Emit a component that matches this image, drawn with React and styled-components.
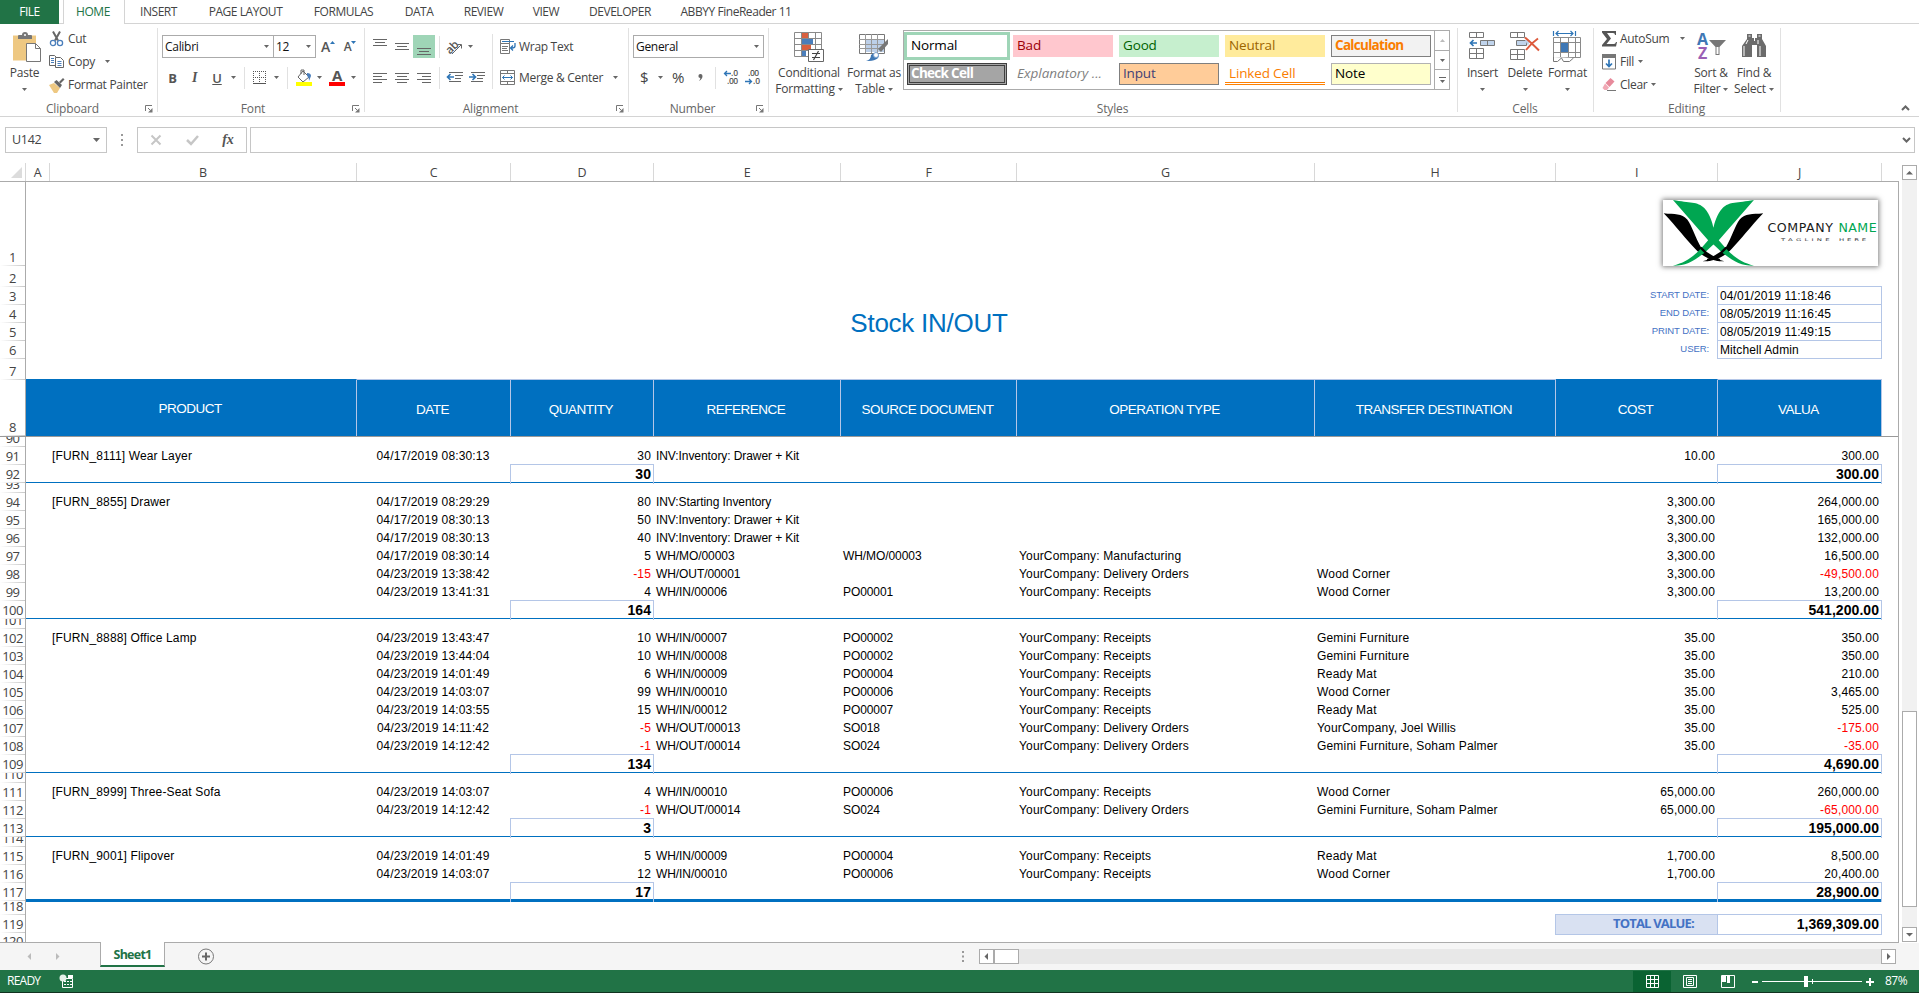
import React from 'react';
import styled, { createGlobalStyle, css } from 'styled-components';

const UI = '"Open Sans", "Noto Sans", sans-serif';
const ARIAL = '"Liberation Sans", Arial, sans-serif';
const BLUE = '#0070c0';
const EDGE = '#b4c6e7';
const FRAME = '#ababab';

const Global = createGlobalStyle`
  *, *::before, *::after { box-sizing: border-box; }
  body { margin: 0; background: #fff; overflow: hidden; }
  svg { display: block; flex: none; overflow: visible; }
`;

const Page = styled.div`
  width: 1919px;
  height: 993px;
  display: flex;
  flex-direction: column;
  background: #fff;
  font: 12px/16px ${UI};
  letter-spacing: -0.3px;
  color: #444;
  white-space: nowrap;
  overflow: hidden;
`;

/* ---------- ribbon tabs ---------- */
const TabStrip = styled.div`
  display: flex;
  height: 24px;
  flex: none;
  border-bottom: 1px solid #d4d4d4;
  letter-spacing: -0.45px;
`;
const FileTab = styled.div`
  width: 59px;
  height: 24px;
  margin-right: 4px;
  background: #217346;
  color: #fff;
  text-align: center;
  line-height: 23px;
`;
const Tab = styled.div`
  width: ${(p) => p.$w}px;
  height: 24px;
  line-height: 23px;
  padding-right: 2px;
  text-align: center;
  ${(p) =>
    p.$active &&
    css`
      color: #217346;
      background: #fff;
      border: 1px solid #d4d4d4;
      border-width: 0 1px;
    `}
`;

/* ---------- ribbon ---------- */
const Ribbon = styled.div`
  display: flex;
  height: 93px;
  flex: none;
  border-bottom: 1px solid #d4d4d4;
`;
const Group = styled.section`
  width: ${(p) => p.$w}px;
  height: 92px;
  display: flex;
  flex-direction: column;
  background: linear-gradient(#e1e1e1, #e1e1e1) right 4px / 1px 84px no-repeat;
`;
const GroupBody = styled.div`
  height: 75px;
  display: flex;
  padding-left: ${(p) => p.$pl || 0}px;
`;
const GroupFoot = styled.div`
  height: 17px;
  display: flex;
  align-items: center;
  justify-content: center;
  color: #666;
  letter-spacing: -0.15px;
  padding: 2px ${(p) => (p.$plain ? 2 : 5)}px 0 0;
`;
const FootLabel = styled.span`
  flex: 1;
  text-align: center;
  padding-right: ${(p) => p.$back || 0}px;
`;
const Stack = styled.div`
  display: flex;
  flex-direction: column;
  width: ${(p) => (p.$w ? p.$w + 'px' : 'auto')};
  padding-top: ${(p) => p.$pt || 0}px;
  padding-left: ${(p) => p.$pl || 0}px;
`;
const Line = styled.div`
  display: flex;
  align-items: center;
  height: ${(p) => p.$h || 23}px;
  margin-top: ${(p) => p.$mt || 0}px;
`;
const Slot = styled.span`
  display: inline-flex;
  align-items: center;
  justify-content: ${(p) => (p.$left ? 'flex-start' : 'center')};
  flex: none;
  width: ${(p) => p.$w}px;
  height: ${(p) => p.$h || 22}px;
  background: ${(p) => p.$bg || 'transparent'};
  letter-spacing: ${(p) => p.$track || '-0.2px'};
`;
const Divider = styled.span`
  width: 1px;
  height: ${(p) => p.$h || 22}px;
  background: #e1e1e1;
  flex: none;
`;
const BigButton = styled.div`
  width: ${(p) => p.$w}px;
  display: flex;
  flex-direction: column;
  align-items: center;
  padding-top: 8px;
`;
const BigArt = styled.div`
  height: 33px;
  padding-left: ${(p) => p.$pl || 0}px;
`;
const BigText = styled.div`
  height: 16px;
  display: flex;
  align-items: center;
  gap: 3px;
  letter-spacing: ${(p) => p.$track || '-0.2px'};
`;
const Combo = styled.div`
  width: ${(p) => p.$w}px;
  height: 23px;
  margin-left: ${(p) => p.$ml || 0}px;
  border: 1px solid #ababab;
  display: flex;
  align-items: center;
  justify-content: space-between;
  padding: 0 4px 0 2px;
  color: #111;
`;
const Glyph = styled.b`
  font: ${(p) => (p.$italic ? 'italic ' : '')}${(p) => p.$weight || 700} ${(p) => p.$size || 13}px/16px ${(p) => (p.$serif ? '"Liberation Serif", serif' : UI)};
  color: #555;
  text-decoration: ${(p) => (p.$u ? 'underline' : 'none')};
`;

/* ---------- styles gallery ---------- */
const Gallery = styled.div`
  width: 547px;
  height: 60px;
  margin-top: 6px;
  border: 1px solid #ababab;
  display: flex;
`;
const Swatches = styled.div`
  flex: 1;
  display: grid;
  grid-template-columns: repeat(5, 100px);
  grid-template-rows: 22px 22px;
  gap: 6px;
  padding: 4px 0 0 3px;
`;
const Swatch = styled.div`
  font-size: 13.5px;
  line-height: 19px;
  letter-spacing: -0.15px;
  padding-left: 3px;
  border: 1px solid ${(p) => p.$line || p.$bg || 'transparent'};
  background: ${(p) => p.$bg || '#fff'};
  color: ${(p) => p.$fg};
  font-weight: ${(p) => (p.$bold ? 700 : 400)};
  font-style: ${(p) => (p.$italic ? 'italic' : 'normal')};
  ${(p) => p.$bold && 'letter-spacing: -0.7px;'}
  ${(p) => p.$italic && 'letter-spacing: 0;'}
  ${(p) => p.$active && 'box-shadow: 0 0 0 3px #9fd5b7;'}
  ${(p) => p.$check && 'box-shadow: inset 0 0 0 1px #a5a5a5, inset 0 0 0 2px #3f3f3f;'}
  ${(p) => p.$linked && 'border-width: 1px 0 3px; padding-left: 4px; border-bottom: 3px double #ff8001;'}
`;
const GalleryNav = styled.div`
  width: 15px;
  border-left: 1px solid #ababab;
  display: flex;
  flex-direction: column;
`;
const NavCell = styled.div`
  flex: 1;
  display: flex;
  flex-direction: column;
  gap: 2px;
  align-items: center;
  justify-content: center;
  & + & { border-top: 1px solid #ababab; }
`;
const Collapse = styled.div`
  flex: 1;
  display: flex;
  justify-content: flex-end;
  align-items: flex-end;
  padding: 0 9px 5px 0;
`;

/* ---------- formula bar ---------- */
const FormulaBar = styled.div`
  display: flex;
  height: 46px;
  flex: none;
  padding: 10px 0 0 5px;
`;
const FieldBox = styled.div`
  width: ${(p) => p.$w}px;
  height: 26px;
  border: 1px solid #c6c6c6;
  display: flex;
  align-items: center;
  justify-content: ${(p) => p.$just || 'space-between'};
  padding: 0 ${(p) => p.$pr ?? 6}px 0 ${(p) => p.$pl ?? 6}px;
  margin-right: 3px;
  font-size: 12.5px;
`;
const Grip = styled.div`
  width: 27px;
  height: 26px;
  padding-right: 3px;
  display: flex;
  align-items: center;
  justify-content: center;
`;

/* ---------- worksheet ---------- */
const COLS = [24, 307, 154, 143, 187, 176, 298, 241, 162, 164];
const TEMPLATE = COLS.map((c) => c + 'px').join(' ');

const ColumnBar = styled.div`
  height: 19px;
  flex: none;
  display: flex;
  width: 1899px;
  border-bottom: 1px solid ${FRAME};
`;
const Corner = styled.div`
  width: 26px;
  height: 18px;
  border-right: 1px solid #d8d8d8;
  display: flex;
  justify-content: flex-end;
  align-items: flex-end;
  padding: 0 3px 3px 0;
`;
const ColumnHead = styled.div`
  width: ${(p) => p.$w}px;
  height: 18px;
  text-align: center;
  font-size: 12.5px;
  line-height: 19px;
  border-right: 1px solid #d8d8d8;
`;
const Workspace = styled.div`
  display: flex;
  flex: none;
  height: 780px;
`;
const SheetColumn = styled.div`
  width: 1899px;
  display: flex;
  flex-direction: column;
`;
const Sheet = styled.div`
  height: 761px;
  display: flex;
  flex-direction: column;
  border-right: 1px solid ${FRAME};
  border-bottom: 1px solid ${FRAME};
`;
const Frozen = styled.div`
  display: flex;
  height: 255px;
  flex: none;
  border-bottom: 1px solid #999;
`;
const HeadColumn = styled.div`
  display: flex;
  flex-direction: column;
`;
const RowHead = styled.div`
  width: 26px;
  height: ${(p) => p.$h}px;
  flex: none;
  display: flex;
  flex-direction: column;
  justify-content: ${(p) => (p.$cut ? 'flex-start' : 'flex-end')};
  overflow: hidden;
  text-align: center;
  font-size: 13px;
  line-height: 17px;
  letter-spacing: -0.65px;
  background: linear-gradient(90deg, #fff, #c8c8c8) left bottom / 25px 1px no-repeat;
  border-right: 1px solid ${FRAME};
  ${(p) => p.$cut && 'background: none;'}
`;
const TopGrid = styled.div`
  display: grid;
  grid-template-columns: ${TEMPLATE};
  grid-template-rows: 84px 21px 18px 18px 18px 18px 20px 57px;
  font-family: ${ARIAL};
`;
const LogoCell = styled.div`
  grid-area: 1 / 9 / 2 / 11;
  display: flex;
  justify-content: flex-end;
  padding: 18px 4px 0 0;
`;
const LogoCard = styled.div`
  width: 215px;
  height: 66px;
  background: #fff;
  box-shadow: 0 0 5px 1px rgba(0, 0, 0, 0.5);
`;
const SheetTitle = styled.div`
  grid-area: 3 / 1 / 7 / 11;
  padding-right: 50px;
  text-align: center;
  font-size: 26px;
  line-height: 72px;
  letter-spacing: -0.25px;
  color: ${BLUE};
`;
const InfoLabel = styled.div`
  grid-row: ${(p) => p.$r};
  grid-column: 9;
  text-align: right;
  padding-right: 9px;
  font-size: 9.5px;
  line-height: 15px;
  letter-spacing: -0.08px;
  color: #4472c4;
`;
const InfoValue = styled.div`
  grid-row: ${(p) => p.$r};
  grid-column: 10;
  margin: -1px 0 0 -1px;
  border: 1px solid ${EDGE};
  padding-left: 2px;
  color: #000;
  line-height: 18px;
  letter-spacing: 0.1px;
`;
const HeaderCell = styled.div`
  grid-row: 8;
  grid-column: ${(p) => p.$col};
  background: ${BLUE};
  color: #fff;
  text-align: center;
  padding-right: 2px;
  font-size: 13.5px;
  line-height: ${(p) => (p.$plain ? 58 : 60)}px;
  height: 57px;
  overflow: hidden;
  letter-spacing: -0.5px;
  border-right: 1px solid ${EDGE};
  border-top: 1px solid ${(p) => (p.$flat ? BLUE : EDGE)};
`;
const Row = styled.div`
  display: flex;
  flex: none;
`;
const RowCells = styled.div`
  display: grid;
  grid-template-columns: ${TEMPLATE};
  width: 1856px;
  height: ${(p) => p.$h}px;
  border-bottom: ${(p) => (p.$rule ? `1px solid ${BLUE}` : 'none')};
  font-family: ${ARIAL};
  line-height: 18px;
  color: #000;
  ${(p) => p.$thick && `box-shadow: 0 1px 0 ${BLUE}; border-bottom-width: 2px;`}
`;
const Cell = styled.div`
  grid-column: ${(p) => p.$col};
  padding: 0 3px 0 ${(p) => (p.$align === 'center' ? 1 : 2)}px;
  text-align: ${(p) => p.$align || 'left'};
  letter-spacing: ${(p) => p.$track ?? 0.15}px;
  color: ${(p) => (p.$neg ? '#ff0000' : '#000')};
`;
const SumCell = styled.div`
  grid-column: ${(p) => p.$col};
  margin: -1px 0 0 -1px;
  border: 1px solid ${EDGE};
  border-bottom-width: ${(p) => (p.$closed ? 1 : 0)}px;
  padding-right: 2px;
  text-align: right;
  font-size: 14px;
  font-weight: 700;
  line-height: 19px;
  letter-spacing: 0.05px;
`;
const TotalLabel = styled.div`
  grid-column: 9;
  margin: -1px 0 0 -1px;
  border: 1px solid ${EDGE};
  background: #d9e1f2;
  color: #4472c4;
  font: 700 13px/17px ${UI};
  letter-spacing: -0.8px;
  text-align: right;
  padding-right: 23px;
`;

/* ---------- scroll bars, tabs, status ---------- */
const VScroll = styled.div`
  width: 15px;
  margin: 2px 0 0 3px;
  height: 777px;
  background: #f1f1f1;
  display: flex;
  flex-direction: column;
`;
const ScrollButton = styled.div`
  width: 15px;
  height: 15px;
  flex: none;
  background: #fff;
  border: 1px solid #ababab;
  display: flex;
  align-items: center;
  justify-content: center;
`;
const VThumb = styled.div`
  height: 196px;
  margin: 531px 0 auto;
  background: #fff;
  border: 1px solid #ababab;
`;
const SheetBar = styled.div`
  height: 27px;
  flex: none;
  display: flex;
  align-items: center;
  background: #f5f5f5;
`;
const SheetTab = styled.div`
  width: 65px;
  height: 25px;
  align-self: flex-start;
  margin-top: -1px;
  background: #fff;
  border: 1px solid ${FRAME};
  border-width: 0 1px;
  border-bottom: 2px solid #217346;
  color: #217346;
  font-weight: 700;
  font-size: 12.5px;
  line-height: 26px;
  letter-spacing: -0.75px;
  text-align: center;
`;
const NavArrow = styled.span`
  width: 28px;
  display: flex;
  justify-content: center;
`;
const HTrack = styled.div`
  flex: 1;
  height: 15px;
  background: #e8e8e8;
`;
const HThumb = styled.div`
  width: 25px;
  height: 15px;
  background: #fff;
  border: 1px solid #ababab;
`;
const Spacer = styled.div`
  flex: ${(p) => (p.$w ? 'none' : 1)};
  width: ${(p) => (p.$w ? p.$w + 'px' : 'auto')};
`;
const StatusBar = styled.div`
  height: 23px;
  flex: none;
  display: flex;
  align-items: center;
  background: #217346;
  border-bottom: 1px solid #10331f;
  color: #fff;
  padding-left: 7px;
`;
const ViewButton = styled.div`
  width: 38px;
  height: 21px;
  align-self: flex-end;
  display: flex;
  align-items: center;
  justify-content: center;
  background: ${(p) => (p.$on ? '#0a6332' : 'transparent')};
`;

/* ---------- small drawings ---------- */
const Down = ({ c = '#666' }) => (
  <svg width="5" height="3"><path d="M0 0h5L2.5 3z" fill={c} /></svg>
);
const Tri = ({ dir, c = '#666', s = 7 }) => {
  const d = { up: 'M0 5.5L3.5 2 7 5.5z', down: 'M0 2h7L3.5 5.5z', left: 'M5 0v7L1.5 3.5z', right: 'M2 0v7L5.5 3.5z' }[dir];
  return <svg width={s} height={s} viewBox="0 0 7 7"><path d={d} fill={c} /></svg>;
};
const Launcher = () => (
  <svg width="8" height="8" fill="none" stroke="#777"><path d="M.5 6V.5H7M3 3l2.5 2.5" /><path d="M7.5 3v4.5H3L7.5 3z" fill="#777" stroke="none" /></svg>
);
const Lines = ({ rows }) => (
  <svg width="14" height="22" stroke="#666">
    {rows.map(([y, a, b]) => <path key={y} d={`M${a} ${y + 0.5}H${b}`} />)}
  </svg>
);
const PasteIcon = () => (
  <svg width="30" height="31">
    <path d="M1 3.500h23v25H1z" fill="#eec882" />
    <path d="M6 7V4q0-1 1-1h3q0-3 3-3t3 3h3q1 0 1 1v3z" fill="#777" />
    <circle cx="13" cy="3" r="1" fill="#fff" />
    <path d="M14.500 11.500h9l5 5v13h-14z" fill="#fff" stroke="#777" />
    <path d="M23.500 11.500v5h5" fill="none" stroke="#777" />
  </svg>
);
const CutIcon = () => (
  <svg width="16" height="16" fill="none">
    <path d="M4 .5l5 9M11 .5l-5 9" stroke="#666" strokeWidth="2" />
    <circle cx="4" cy="12" r="2.600" stroke="#4a7ebb" strokeWidth="1.300" /><circle cx="11" cy="12" r="2.600" stroke="#4a7ebb" strokeWidth="1.300" />
  </svg>
);
const CopyIcon = () => (
  <svg width="16" height="16" fill="#fff" stroke="#666">
    <path d="M.5 1.500h5l2 2v8h-7z" /><path d="M6.500 3.500h5l3 3v7h-8z" />
    <path d="M2 4.500h3M2 6.500h3M2 8.500h3M8.500 7.500h4M8.500 9.500h4M8.500 11.500h4" stroke="#4a7ebb" />
  </svg>
);
const BrushIcon = () => (
  <svg width="16" height="16">
    <path d="M0 8l5-2 6 5-3 5-3 0z" fill="#eec882" />
    <path d="M5 5l2.500-2 5.500 5-2 3z" fill="#666" /><path d="M10 5l4-4 1.500 1.500-4 4z" fill="#666" />
  </svg>
);
const BordersIcon = () => (
  <svg width="14" height="14" stroke="#555" fill="none">
    <path d="M0 .5h13M0 6.500h13M.5 0v13M6.500 0v13M12.500 0v13" strokeDasharray="1 1" />
    <path d="M0 12.500h13" />
  </svg>
);
const BucketIcon = () => (
  <svg width="18" height="17" fill="none">
    <path d="M8 2l6 6-6 5-5-5z" fill="#fff" stroke="#666" /><path d="M6 5V1h3v5" stroke="#666" />
    <path d="M12 4q4 0 4 3l-2 5q0-4-2-5z" fill="#4a7ebb" /><path d="M1 13h16v4H1z" fill="#ff0" />
  </svg>
);
const OrientIcon = () => (
  <svg width="18" height="18" fill="none">
    <text x="-1" y="13" transform="rotate(-45 6 9)" fontSize="11.500" fontFamily="Open Sans, sans-serif" fontWeight="600" fill="#555">ab</text>
    <path d="M6 16l9-9M11.500 6.500H15.500V10.500" stroke="#666" />
  </svg>
);
const IndentIcon = ({ right }) => (
  <svg width="16" height="12" fill="none">
    <path d="M2 .5h14M8 3.500h8M8 6.500h6M2 9.500h12" stroke="#666" />
    <path d={right ? 'M0 5h6M3.500 2L6.500 5 3.500 8' : 'M1 5h6M3.500 2L.5 5l3 3'} stroke="#2e75b6" strokeWidth="1.600" />
  </svg>
);
const WrapIcon = () => (
  <svg width="16" height="16" fill="none">
    <path d="M.5.5h9v4h-9zM.5 4.500h9v10h-9z" stroke="#777" />
    <path d="M2 7.500h6M2 9.500h5M2 11.500h6" stroke="#777" /><path d="M2 2.500h12" stroke="#2e75b6" />
    <path d="M15 4v3q0 2-3 2h-1M13 6.500L10.500 9l2.500 2.500" stroke="#2e75b6" strokeWidth="1.300" />
  </svg>
);
const MergeIcon = () => (
  <svg width="15" height="15" fill="none">
    <path d="M.5.5h14v14H.5zM.5 3.500h14M.5 11.500h14M7.500.5v3M7.500 11.500v3" stroke="#777" />
    <path d="M2.500 7.500h10M4.500 5.500l-2 2 2 2M10.500 5.500l2 2-2 2" stroke="#2e75b6" />
  </svg>
);
const DecimalIcon = ({ less }) => (
  <svg width="16" height="15" fontFamily="Open Sans, sans-serif" fontSize="8.500" fontWeight="600" fill="#555">
    {less ? <><text x="3" y="6" textLength="11">.00</text><text x="8" y="14">.0</text></> : <><text x="7" y="6">.0</text><text x="3" y="14" textLength="11">.00</text></>}
    <path d={less ? 'M0 11.500h6M4 9l2.500 2.500L4 14' : 'M1 3.500h6M3 1L.5 3.500 3 6'} stroke="#2e75b6" fill="none" strokeWidth="1.300" />
  </svg>
);
const CondIcon = () => (
  <svg width="30" height="31" fill="none">
    <path d="M.5.5h27v24H.5z" fill="#fff" />
    <path d="M8 1h6v6H8zM8 13h9v5H8z" fill="#d9603f" /><path d="M8 7h11v5H8zM8 19h4v5H8z" fill="#4a7ebb" />
    <path d="M.5.500h27v24H.5zM0 6.500h28M0 12.500h28M0 18.500h28M7.500 0v24M21.500 0v24M14.500 0v6M14.500 18v6" stroke="#8a8a8a" />
    <path d="M14.500 17.500h15v12h-15z" fill="#fff" stroke="#666" />
    <path d="M18 21.500h8M18 25.500h8M24.500 19l-5 9" stroke="#444" strokeWidth="1.200" />
  </svg>
);
const TableIcon = () => (
  <svg width="30" height="29" fill="none">
    <path d="M7 7h18v13H7z" fill="#bdd0e9" />
    <path d="M.5 2.500h25v19H.5z" stroke="#777" /><path d="M0 7.500h25M0 12.500h25M0 16.500h25M6.500 2v19M12.500 2v19M18.500 2v19" stroke="#999" />
    <path d="M29 7v5l-7 8-3-3z" fill="#777" /><path d="M7 29q5-1 5-6 4-4 8 0 0 6-13 6z" fill="#3f78b5" /><circle cx="17" cy="23" r="2.500" fill="#fff" stroke="#7ba3d0" />
  </svg>
);
const InsertIcon = () => (
  <svg width="27" height="29" fill="none">
    <path d="M.5.500h14v5H.5zM7.500.500v5M.5 16.500h14v10H.5zM7.500 16.500v10M.5 21.500h14" stroke="#777" />
    <path d="M11.500 8.500h14v5h-14zM18.500 8.500v5" fill="#c0d4ec" stroke="#777" />
    <path d="M2 11h6M4.500 8L1.500 11l3 3" stroke="#2e75b6" strokeWidth="1.700" />
  </svg>
);
const DeleteIcon = () => (
  <svg width="30" height="29" fill="none">
    <path d="M.5.500h14v5H.5zM7.500.500v5M.5 17.500h14v10H.5zM7.500 17.500v10M.5 22.500h14" stroke="#777" />
    <path d="M6.500 8.500h10v5h-10z" fill="#c0d4ec" stroke="#777" /><path d="M15 8h5l-2 6z" fill="#c0d4ec" />
    <path d="M15 5.500q6 5 14 13M28 6.500q-6 4-12 11.500" stroke="#dd5a3c" strokeWidth="2" />
  </svg>
);
const FormatIcon = () => (
  <svg width="29" height="31" fill="none">
    <path d="M.5-1v5M22.500-1v5M3 1.500h17M5.500-1L3 1.500 5.500 4M17.500-1L20 1.500 17.500 4" stroke="#2e75b6" strokeWidth="1.200" />
    <path d="M.5 5.500h27v20H.5zM0 10.500h28M0 20.500h28M7.500 5v20M15.500 5v20M22.500 5v20" stroke="#8a8a8a" />
    <path d="M8 11h7v9H8z" fill="#3f78b5" /><path d="M.5 25v4.500h4l4-3.500 2 3.500h6l4-3.500" stroke="#777" fill="#fff" />
  </svg>
);
const SumIcon = () => <svg width="15" height="16"><path d="M0 0h14v4h-1q0-2-2-2H5l4 5.500L4.500 13H12q1.500 0 2-2h1l-1 4.500H0V14l5-6-5-6.500z" fill="#555" /></svg>;
const FillIcon = () => (
  <svg width="15" height="16" fill="none"><path d="M.5.500h13v14.500H.5z" stroke="#777" /><path d="M0 0h14v4H0z" fill="#777" /><path d="M7 5.500v7M4 9.500l3 3 3-3" stroke="#2e75b6" strokeWidth="1.700" /></svg>
);
const EraserIcon = () => (
  <svg width="15" height="14"><path d="M8.500 0l4 3.500-5 5.500-4-4z" fill="#e78a9b" /><path d="M3 5.500l4 4-2 2.500H2.500L.5 10z" fill="#f0a9b5" /><path d="M5 12.500h9" stroke="#777" /></svg>
);
const SortIcon = () => (
  <svg width="31" height="29" fontFamily="Open Sans, sans-serif" fontWeight="700" fontSize="16">
    <text x="1" y="12.500" fill="#3f78b5">A</text><text x="2" y="26.500" fill="#9b5fb5">Z</text>
    <path d="M13 8h17l-6.500 7v8h-4v-8z" fill="#777" /><path d="M20.500 15h2v7h-2z" fill="#fff" />
  </svg>
);
const FindIcon = () => (
  <svg width="27" height="27" fill="#6b6b6b">
    <path d="M6 2h5v4h2v3h1V6h2V2h5v5l4 7v11h-9V13h-5v12H1V14l5-7z" /><path d="M3 14v10M19 14v10" stroke="#fff" /><path d="M7.500 4h2M17.500 4h2M7 8l-2 4M17 8v4" stroke="#fff" />
  </svg>
);
const LEAF = 'M491 99C525 103 545 98 562 118C578 140 582 165 607 208C625 228 650 238 674 244C640 245 610 232 585 205C560 180 530 140 491 99Z';
const Logo = () => (
  <svg width="215" height="66" viewBox="491 59 644 199">
    <g fill="#000">
      <path d={LEAF} />
      <path transform="translate(1282 0) scale(-1 1)" d={LEAF} />
    </g>
    <path fill="#00a651" d="M519 59C570 69 592 62 614 84C632 104 638 130 641 143C644 130 650 104 668 84C690 62 712 69 763 59L657 180C690 220 715 245 763 257C720 258 690 240 641 193C592 240 562 258 519 257C567 245 592 220 625 180Z" />
    <path fill="none" stroke="#000" strokeWidth="7" d="M602 202Q624 228 660 240M680 202Q658 228 622 240" />
    <g fontFamily="DejaVu Sans, sans-serif" fontSize="38" letterSpacing="0">
      <text x="804" y="157" textLength="197" fill="#1a1a1a">COMPANY</text>
      <text x="1018" y="157" textLength="115" fill="#00a651">NAME</text>
      <g transform="translate(845 182) scale(1.900 1)" fontSize="11" fill="#333">
        <text textLength="77">TAGLINE</text><text x="92" textLength="43">HERE</text>
      </g>
    </g>
  </svg>
);

/* ---------- data ---------- */
const TABS = [
  ['HOME', 62, true], ['INSERT', 69], ['PAGE LAYOUT', 105], ['FORMULAS', 91], ['DATA', 60], ['REVIEW', 69], ['VIEW', 56], ['DEVELOPER', 92], ['ABBYY FineReader 11', 140],
];
const SWATCHES = [
  { t: 'Normal', fg: '#000', active: 1 }, { t: 'Bad', bg: '#ffc7ce', fg: '#9c0006' }, { t: 'Good', bg: '#c6efce', fg: '#006100' }, { t: 'Neutral', bg: '#ffeb9c', fg: '#9c6500' },
  { t: 'Calculation', bg: '#f2f2f2', fg: '#fa7d00', line: '#7f7f7f', bold: 1 }, { t: 'Check Cell', bg: '#a5a5a5', fg: '#fff', line: '#3f3f3f', bold: 1, check: 1 },
  { t: 'Explanatory ...', fg: '#7f7f7f', italic: 1 }, { t: 'Input', bg: '#ffcc99', fg: '#3f3f76', line: '#7f7f7f' }, { t: 'Linked Cell', fg: '#fa7d00', linked: 1 }, { t: 'Note', bg: '#ffffcc', fg: '#000', line: '#b2b2b2' },
];
const HEADERS = ['DATE', 'QUANTITY', 'REFERENCE', 'SOURCE DOCUMENT', 'OPERATION TYPE', 'TRANSFER DESTINATION', 'COST', 'VALUA'];
const INFO = [['START DATE:', '04/01/2019 11:18:46'], ['END DATE:', '08/05/2019 11:16:45'], ['PRINT DATE:', '08/05/2019 11:49:15'], ['USER:', 'Mitchell Admin']];
const R = 'YourCompany: Receipts';
const D = 'YourCompany: Delivery Orders';
const GROUPS = [
  { name: '[FURN_8111] Wear Layer', qty: '30', total: '300.00', items: [['04/17/2019 08:30:13', '30', 'INV:Inventory: Drawer + Kit', '', '', '', '10.00', '300.00']] },
  {
    name: '[FURN_8855] Drawer', qty: '164', total: '541,200.00', items: [
      ['04/17/2019 08:29:29', '80', 'INV:Starting Inventory', '', '', '', '3,300.00', '264,000.00'],
      ['04/17/2019 08:30:13', '50', 'INV:Inventory: Drawer + Kit', '', '', '', '3,300.00', '165,000.00'],
      ['04/17/2019 08:30:13', '40', 'INV:Inventory: Drawer + Kit', '', '', '', '3,300.00', '132,000.00'],
      ['04/17/2019 08:30:14', '5', 'WH/MO/00003', 'WH/MO/00003', 'YourCompany: Manufacturing', '', '3,300.00', '16,500.00'],
      ['04/23/2019 13:38:42', '-15', 'WH/OUT/00001', '', D, 'Wood Corner', '3,300.00', '-49,500.00'],
      ['04/23/2019 13:41:31', '4', 'WH/IN/00006', 'PO00001', R, 'Wood Corner', '3,300.00', '13,200.00'],
    ],
  },
  {
    name: '[FURN_8888] Office Lamp', qty: '134', total: '4,690.00', items: [
      ['04/23/2019 13:43:47', '10', 'WH/IN/00007', 'PO00002', R, 'Gemini Furniture', '35.00', '350.00'],
      ['04/23/2019 13:44:04', '10', 'WH/IN/00008', 'PO00002', R, 'Gemini Furniture', '35.00', '350.00'],
      ['04/23/2019 14:01:49', '6', 'WH/IN/00009', 'PO00004', R, 'Ready Mat', '35.00', '210.00'],
      ['04/23/2019 14:03:07', '99', 'WH/IN/00010', 'PO00006', R, 'Wood Corner', '35.00', '3,465.00'],
      ['04/23/2019 14:03:55', '15', 'WH/IN/00012', 'PO00007', R, 'Ready Mat', '35.00', '525.00'],
      ['04/23/2019 14:11:42', '-5', 'WH/OUT/00013', 'SO018', D, 'YourCompany, Joel Willis', '35.00', '-175.00'],
      ['04/23/2019 14:12:42', '-1', 'WH/OUT/00014', 'SO024', D, 'Gemini Furniture, Soham Palmer', '35.00', '-35.00'],
    ],
  },
  {
    name: '[FURN_8999] Three-Seat Sofa', qty: '3', total: '195,000.00', items: [
      ['04/23/2019 14:03:07', '4', 'WH/IN/00010', 'PO00006', R, 'Wood Corner', '65,000.00', '260,000.00'],
      ['04/23/2019 14:12:42', '-1', 'WH/OUT/00014', 'SO024', D, 'Gemini Furniture, Soham Palmer', '65,000.00', '-65,000.00'],
    ],
  },
  {
    name: '[FURN_9001] Flipover', qty: '17', total: '28,900.00', items: [
      ['04/23/2019 14:01:49', '5', 'WH/IN/00009', 'PO00004', R, 'Ready Mat', '1,700.00', '8,500.00'],
      ['04/23/2019 14:03:07', '12', 'WH/IN/00010', 'PO00006', R, 'Wood Corner', '1,700.00', '20,400.00'],
    ],
  },
];
const ALIGN = ['center', 'right', 'left', 'left', 'left', 'left', 'right', 'right'];
const TRACK = [0.15, 0.15, -0.08, -0.08, 0.15, 0.18, 0.15, 0.15];

function SheetRows() {
  const out = [];
  let n = 90;
  const push = (h, cells, opts = {}) => {
    out.push(
      <Row key={n}>
        <RowHead $h={h} $cut={opts.cut}>{n}</RowHead>
        <RowCells $h={h} $rule={opts.rule} $thick={opts.thick}>{cells}</RowCells>
      </Row>,
    );
    n += 1;
  };
  GROUPS.forEach((g, gi) => {
    push(10, null);
    g.items.forEach((item, i) => {
      push(18, (
        <>
          {i === 0 && <Cell $col={2}>{g.name}</Cell>}
          {item.map((v, c) => v && (
            <Cell key={c} $col={c + 3} $align={ALIGN[c]} $track={TRACK[c]} $neg={v.startsWith('-')}>{v}</Cell>
          ))}
        </>
      ));
    });
    push(18, <><SumCell $col={4}>{g.qty}</SumCell><SumCell $col={10}>{g.total}</SumCell></>, { rule: true, thick: gi === GROUPS.length - 1 });
  });
  push(14, null);
  push(18, <><TotalLabel>TOTAL VALUE:</TotalLabel><SumCell $col={10} $closed>1,369,309.00</SumCell></>);
  push(9, null, { cut: true });
  return out;
}

const Foot = ({ children, back, plain }) => (
  <GroupFoot $plain={plain}><FootLabel $back={back}>{children}</FootLabel>{!plain && <Launcher />}</GroupFoot>
);

function RibbonArea() {
  return (
    <Ribbon>
      <Group $w={158}>
        <GroupBody>
          <BigButton $w={49}><BigArt $pl={4}><PasteIcon /></BigArt><BigText>Paste</BigText><BigText><Down /></BigText></BigButton>
          <Stack $pt={3}>
            <Line><Slot $w={19} $left><CutIcon /></Slot>Cut</Line>
            <Line><Slot $w={19} $left><CopyIcon /></Slot>Copy<Slot $w={25}><Down /></Slot></Line>
            <Line><Slot $w={19} $left><BrushIcon /></Slot>Format Painter</Line>
          </Stack>
        </GroupBody>
        <Foot>Clipboard</Foot>
      </Group>
      <Group $w={207}>
        <GroupBody $pl={4}>
          <Stack $pt={11}>
            <Line>
              <Combo $w={112}>Calibri<Down /></Combo><Combo $w={43} $ml={-1}>12<Down /></Combo>
              <Slot $w={24}><Glyph $size={14} $weight={600}>A</Glyph><svg width="5" height="14"><path d="M0 4l2.500-3L5 4z" fill="#2e75b6" /></svg></Slot>
              <Slot $w={20}><Glyph $size={12} $weight={600}>A</Glyph><svg width="5" height="14"><path d="M0 1h5L2.500 4z" fill="#2e75b6" /></svg></Slot>
            </Line>
            <Line $mt={8}>
              <Slot $w={21}><Glyph>B</Glyph></Slot><Slot $w={23}><Glyph $italic $serif $size={14}>I</Glyph></Slot><Slot $w={22}><Glyph $u $weight={600}>U</Glyph></Slot><Slot $w={11}><Down /></Slot>
              <Slot $w={10}><Divider /></Slot>
              <Slot $w={22}><BordersIcon /></Slot><Slot $w={11}><Down /></Slot>
              <Slot $w={10}><Divider /></Slot>
              <Slot $w={23}><BucketIcon /></Slot><Slot $w={9}><Down /></Slot>
              <Slot $w={26}><svg width="16" height="17"><text x="3" y="12" fontFamily="Open Sans" fontWeight="700" fontSize="15" fill="#555">A</text><path d="M0 13h16v4H0z" fill="#f00" /></svg></Slot><Slot $w={7}><Down /></Slot>
            </Line>
          </Stack>
        </GroupBody>
        <Foot back={4}>Font</Foot>
      </Group>
      <Group $w={264}>
        <GroupBody $pl={4}>
          <Stack $pt={11} $w={123}>
            <Line>
              <Slot $w={22}><Lines rows={[[3, 0, 14], [6, 2, 12], [9, 0, 14]]} /></Slot>
              <Slot $w={22}><Lines rows={[[7, 0, 14], [10, 2, 12], [13, 0, 14]]} /></Slot>
              <Slot $w={22} $h={23} $bg="#9fd5b7"><Lines rows={[[12, 0, 14], [15, 2, 12], [18, 0, 14]]} /></Slot>
              <Slot $w={9}><Divider /></Slot>
              <Slot $w={22}><OrientIcon /></Slot><Slot $w={8}><Down /></Slot>
            </Line>
            <Line $mt={8}>
              <Slot $w={22}><Lines rows={[[6, 0, 14], [9, 0, 9], [12, 0, 14], [15, 0, 9]]} /></Slot>
              <Slot $w={22}><Lines rows={[[6, 0, 14], [9, 2, 12], [12, 0, 14], [15, 2, 12]]} /></Slot>
              <Slot $w={22}><Lines rows={[[6, 0, 14], [9, 5, 14], [12, 0, 14], [15, 5, 14]]} /></Slot>
              <Slot $w={9}><Divider /></Slot>
              <Slot $w={22}><IndentIcon /></Slot><Slot $w={22}><IndentIcon right /></Slot>
            </Line>
          </Stack>
          <Stack $pt={10}><Divider $h={55} /></Stack>
          <Stack $pt={11} $pl={7}>
            <Line><Slot $w={19} $left><WrapIcon /></Slot>Wrap Text</Line>
            <Line $mt={8}><Slot $w={19} $left><MergeIcon /></Slot>Merge &amp; Center<Slot $w={25}><Down /></Slot></Line>
          </Stack>
        </GroupBody>
        <Foot>Alignment</Foot>
      </Group>
      <Group $w={140}>
        <GroupBody $pl={4}>
          <Stack $pt={11}>
            <Line><Combo $w={131}>General<Down /></Combo></Line>
            <Line $mt={8}>
              <Slot $w={23}><svg width="10" height="18"><text x="0" y="14" fontSize="15" fontFamily="Open Sans" fill="#444">$</text></svg></Slot><Slot $w={9}><Down /></Slot>
              <Slot $w={28}><svg width="14" height="18"><text x="0" y="14" fontSize="15" textLength="13" fontFamily="Open Sans" fill="#444">%</text></svg></Slot>
              <Slot $w={15}><svg width="5" height="16"><path d="M2.500 4a2 2 0 0 1 2 2q0 3-3.500 5 1.500-2 1.300-3A2 2 0 0 1 2.500 4z" fill="#666" /></svg></Slot>
              <Slot $w={15}><Divider /></Slot>
              <Slot $w={17}><DecimalIcon /></Slot><Slot $w={26}><DecimalIcon less /></Slot>
            </Line>
          </Stack>
        </GroupBody>
        <Foot>Number</Foot>
      </Group>
      <Group $w={689}>
        <GroupBody $pl={4}>
          <BigButton $w={72}><BigArt><CondIcon /></BigArt><BigText>Conditional</BigText><BigText>Formatting <Down /></BigText></BigButton>
          <BigButton $w={58}><BigArt><TableIcon /></BigArt><BigText>Format as</BigText><BigText>Table <Down /></BigText></BigButton>
          <Gallery>
            <Swatches>
              {SWATCHES.map((s) => (
                <Swatch key={s.t} $bg={s.bg} $fg={s.fg} $line={s.line} $bold={s.bold} $italic={s.italic} $active={s.active} $check={s.check} $linked={s.linked}>{s.t}</Swatch>
              ))}
            </Swatches>
            <GalleryNav>
              <NavCell><svg width="5" height="3"><path d="M0 3h5L2.500 0z" fill="#bbb" /></svg></NavCell>
              <NavCell><Down /></NavCell>
              <NavCell><svg width="7" height="1"><path d="M0 0h7v1H0z" fill="#666" /></svg><Down /></NavCell>
            </GalleryNav>
          </Gallery>
        </GroupBody>
        <Foot plain>Styles</Foot>
      </Group>
      <Group $w={136}>
        <GroupBody $pl={3}>
          <BigButton $w={43}><BigArt><InsertIcon /></BigArt><BigText>Insert</BigText><BigText><Down /></BigText></BigButton>
          <BigButton $w={42}><BigArt><DeleteIcon /></BigArt><BigText>Delete</BigText><BigText><Down /></BigText></BigButton>
          <BigButton $w={43}><BigArt><FormatIcon /></BigArt><BigText>Format</BigText><BigText><Down /></BigText></BigButton>
        </GroupBody>
        <Foot plain>Cells</Foot>
      </Group>
      <Group $w={187}>
        <GroupBody $pl={8}>
          <Stack $pt={3} $w={87}>
            <Line><Slot $w={18} $left><SumIcon /></Slot>AutoSum<Slot $w={26}><Down /></Slot></Line>
            <Line><Slot $w={18} $left><FillIcon /></Slot>Fill<Slot $w={13}><Down /></Slot></Line>
            <Line><Slot $w={18} $left><EraserIcon /></Slot>Clear<Slot $w={13}><Down /></Slot></Line>
          </Stack>
          <BigButton $w={44}><BigArt><SortIcon /></BigArt><BigText>Sort &amp;</BigText><BigText>Filter <Down /></BigText></BigButton>
          <BigButton $w={42}><BigArt><FindIcon /></BigArt><BigText>Find &amp;</BigText><BigText>Select <Down /></BigText></BigButton>
        </GroupBody>
        <Foot plain>Editing</Foot>
      </Group>
      <Collapse><svg width="9" height="6" fill="none"><path d="M1 5l3.500-3.500L8 5" stroke="#666" strokeWidth="2" /></svg></Collapse>
    </Ribbon>
  );
}

export default function App() {
  return (
    <Page>
      <Global />
      <TabStrip>
        <FileTab>FILE</FileTab>
        {TABS.map(([t, w, on]) => <Tab key={t} $w={w} $active={on}>{t}</Tab>)}
      </TabStrip>
      <RibbonArea />
      <FormulaBar>
        <FieldBox $w={102}>U142<svg width="7" height="4"><path d="M0 0h7L3.500 4z" fill="#666" /></svg></FieldBox>
        <Grip><svg width="2" height="12" fill="#999"><path d="M0 0h2v2H0zM0 5h2v2H0zM0 10h2v2H0z" /></svg></Grip>
        <FieldBox $w={110} $just="flex-start" $pl={0} $pr={0}>
          <Slot $w={36}><svg width="12" height="12"><path d="M1.500 1.500l9 9M10.500 1.500l-9 9" stroke="#c6c6c6" strokeWidth="2" /></svg></Slot>
          <Slot $w={36}><svg width="13" height="12"><path d="M1 6l4 4 7-8" stroke="#c6c6c6" strokeWidth="2.500" fill="none" /></svg></Slot>
          <Slot $w={36}><Glyph $italic $serif $size={14}>fx</Glyph></Slot>
        </FieldBox>
        <FieldBox $w={1665} $just="flex-end" $pr={3}><svg width="9" height="6" fill="none"><path d="M1 1l3.500 3.500L8 1" stroke="#666" strokeWidth="2" /></svg></FieldBox>
      </FormulaBar>
      <Workspace>
        <SheetColumn>
          <ColumnBar>
            <Corner><svg width="12" height="11"><path d="M12 0v11H1z" fill="#dcdcdc" /></svg></Corner>
            {COLS.map((w, i) => <ColumnHead key={i} $w={w}>{'ABCDEFGHIJ'[i]}</ColumnHead>)}
          </ColumnBar>
          <Sheet>
            <Frozen>
              <HeadColumn>
                {[84, 21, 18, 18, 18, 18, 21, 56].map((h, i) => <RowHead key={i} $h={h}>{i + 1}</RowHead>)}
              </HeadColumn>
              <TopGrid>
                <LogoCell><LogoCard><Logo /></LogoCard></LogoCell>
                <SheetTitle>Stock IN/OUT</SheetTitle>
                {INFO.map(([k, v], i) => (
                  <React.Fragment key={k}>
                    <InfoLabel $r={i + 3}>{k}</InfoLabel>
                    <InfoValue $r={i + 3}>{v}</InfoValue>
                  </React.Fragment>
                ))}
                <HeaderCell $col="1 / 3" $flat $plain>PRODUCT</HeaderCell>
                {HEADERS.map((h, i) => <HeaderCell key={h} $col={i + 3} $flat={h === 'COST'}>{h}</HeaderCell>)}
              </TopGrid>
            </Frozen>
            <SheetRows />
          </Sheet>
        </SheetColumn>
        <VScroll>
          <ScrollButton><Tri dir="up" /></ScrollButton>
          <VThumb />
          <ScrollButton><Tri dir="down" /></ScrollButton>
        </VScroll>
      </Workspace>
      <SheetBar>
        <Spacer $w={15} />
        <NavArrow><Tri dir="left" c="#bbb" /></NavArrow><NavArrow><Tri dir="right" c="#bbb" /></NavArrow>
        <Spacer $w={29} />
        <SheetTab>Sheet1</SheetTab>
        <Spacer $w={33} />
        <svg width="17" height="17" fill="none"><circle cx="8" cy="8.500" r="7.500" stroke="#777" /><path d="M8 4.500v8M4 8.500h8" stroke="#666" strokeWidth="2" /></svg>
        <Spacer $w={747} />
        <svg width="2" height="11" fill="#999"><path d="M0 0h2v2H0zM0 4.500h2v2H0zM0 9h2v2H0z" /></svg>
        <Spacer $w={15} />
        <ScrollButton><Tri dir="left" /></ScrollButton>
        <HTrack><HThumb /></HTrack>
        <ScrollButton><Tri dir="right" /></ScrollButton>
        <Spacer $w={23} />
      </SheetBar>
      <StatusBar>
        <Slot $w={52} $left $track="-0.75px">READY</Slot>
        <svg width="15" height="14"><path d="M3.500 4.500h10v9h-10z" fill="none" stroke="#fff" /><circle cx="4" cy="4" r="3.500" fill="#e6f2ea" /><path d="M9 1h5v3H9zM5 7h2v1H5zM8 7h2v1H8zM11 7h2v1h-2zM5 10h2v1H5zM8 10h2v1H8zM11 10h2v1h-2z" fill="#fff" /></svg>
        <Spacer />
        <ViewButton $on><svg width="13" height="13" stroke="#fff" fill="none"><path d="M.5.500h12v12H.5zM4.500 0v13M8.500 0v13M0 4.500h13M0 8.500h13" /></svg></ViewButton>
        <ViewButton><svg width="14" height="13" stroke="#fff" fill="none"><path d="M.5.500h13v12H.5zM3.500 2.500h7v8h-7zM5 4.500h4M5 6.500h4M5 8.500h4" /></svg></ViewButton>
        <ViewButton><svg width="14" height="13" fill="none"><path d="M.5.500h13v12H.5z" stroke="#fff" /><path d="M1 1h4v6H1zM6 1h3v7H6z" fill="#fff" /></svg></ViewButton>
        <Spacer $w={5} />
        <svg width="124" height="13" fill="#fff"><path d="M0 6h6v2H0zM10 6h100v1H10zM52 1h4v11h-4zM60 4h1v5h-1zM114 6h8v2h-8zM117 3h2v8h-2z" /></svg>
        <Slot $w={40} $track="-0.5px">87%</Slot>
        <Spacer $w={3} />
      </StatusBar>
    </Page>
  );
}
